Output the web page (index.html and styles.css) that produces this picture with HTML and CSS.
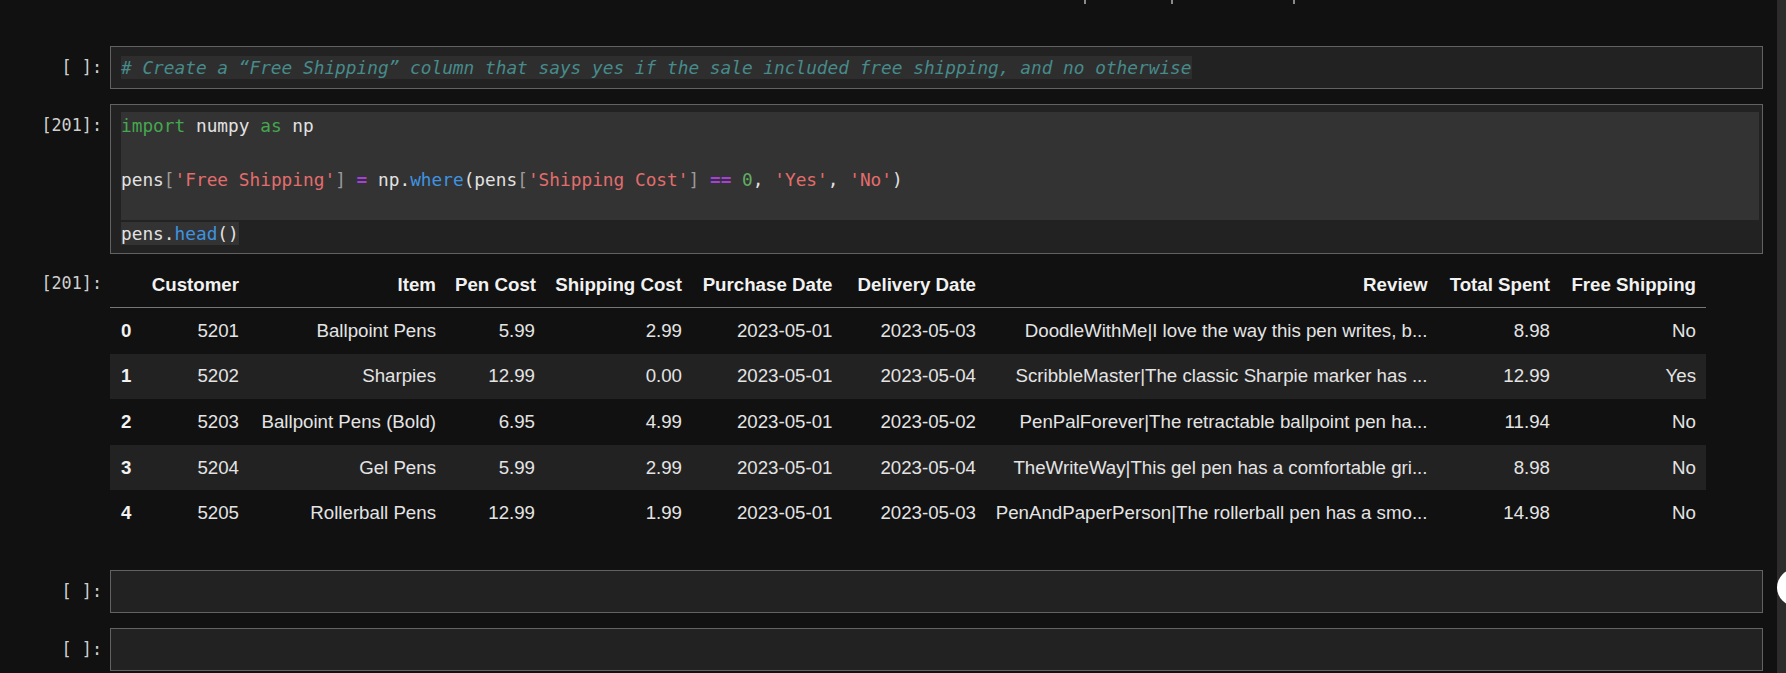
FILE: index.html
```html
<!DOCTYPE html>
<html lang="en">
<head>
<meta charset="utf-8">
<title>Notebook</title>
<link rel="stylesheet" href="styles.css">
</head>
<body>
<div class="app">
  <main class="notebook">
    <div class="topbar"><span class="mark m1"></span><span class="mark m2"></span><span class="mark m3"></span></div>

    <div class="cell">
      <div class="prompt">[ ]:</div>
      <div class="editor">
        <div class="line"><span class="sel sel-dim cm-comment"># Create a “Free Shipping” column that says yes if the sale included free shipping, and no otherwise</span></div>
      </div>
    </div>

    <div class="cell cell-has-output">
      <div class="prompt">[201]:</div>
      <div class="editor editor-multi">
        <div class="line line-sel"><span class="cm-kw">import</span> numpy <span class="cm-kw">as</span> np</div>
        <div class="line line-sel"> </div>
        <div class="line line-sel">pens<span class="cm-br">[</span><span class="cm-str">'Free Shipping'</span><span class="cm-br">]</span> <span class="cm-op">=</span> np.<span class="cm-prop">where</span>(pens<span class="cm-br">[</span><span class="cm-str">'Shipping Cost'</span><span class="cm-br">]</span> <span class="cm-op">==</span> <span class="cm-num">0</span>, <span class="cm-str">'Yes'</span>, <span class="cm-str">'No'</span>)</div>
        <div class="line line-sel"> </div>
        <div class="line"><span class="sel">pens.<span class="cm-prop">head</span>()</span></div>
      </div>
    </div>

    <div class="output">
      <div class="prompt out-prompt">[201]:</div>
      <div class="out-body">
        <table class="df">
          <colgroup>
            <col class="w-idx"><col class="w-cust"><col class="w-item"><col class="w-pen"><col class="w-ship"><col class="w-pdate"><col class="w-ddate"><col class="w-review"><col class="w-total"><col class="w-free">
          </colgroup>
          <thead>
            <tr><th></th><th>Customer</th><th>Item</th><th>Pen Cost</th><th>Shipping Cost</th><th>Purchase Date</th><th>Delivery Date</th><th>Review</th><th>Total Spent</th><th>Free Shipping</th></tr>
          </thead>
          <tbody>
            <tr><th>0</th><td>5201</td><td>Ballpoint Pens</td><td>5.99</td><td>2.99</td><td>2023-05-01</td><td>2023-05-03</td><td>DoodleWithMe|I love the way this pen writes, b...</td><td>8.98</td><td>No</td></tr>
            <tr><th>1</th><td>5202</td><td>Sharpies</td><td>12.99</td><td>0.00</td><td>2023-05-01</td><td>2023-05-04</td><td>ScribbleMaster|The classic Sharpie marker has ...</td><td>12.99</td><td>Yes</td></tr>
            <tr><th>2</th><td>5203</td><td>Ballpoint Pens (Bold)</td><td>6.95</td><td>4.99</td><td>2023-05-01</td><td>2023-05-02</td><td>PenPalForever|The retractable ballpoint pen ha...</td><td>11.94</td><td>No</td></tr>
            <tr><th>3</th><td>5204</td><td>Gel Pens</td><td>5.99</td><td>2.99</td><td>2023-05-01</td><td>2023-05-04</td><td>TheWriteWay|This gel pen has a comfortable gri...</td><td>8.98</td><td>No</td></tr>
            <tr><th>4</th><td>5205</td><td>Rollerball Pens</td><td>12.99</td><td>1.99</td><td>2023-05-01</td><td>2023-05-03</td><td>PenAndPaperPerson|The rollerball pen has a smo...</td><td>14.98</td><td>No</td></tr>
          </tbody>
        </table>
      </div>
    </div>

    <div class="cell">
      <div class="prompt">[ ]:</div>
      <div class="editor"><div class="line"> </div></div>
    </div>

    <div class="cell">
      <div class="prompt">[ ]:</div>
      <div class="editor"><div class="line"> </div></div>
    </div>
  </main>
  <aside class="scrollbar"><div class="knob"></div></aside>
</div>
</body>
</html>
```
FILE: styles.css
```css
html, body {
  margin: 0;
  padding: 0;
  background: #111111;
  height: 100%;
  overflow: hidden;
}

.app {
  display: flex;
  height: 673px;
  background: #111111;
}

.notebook {
  flex: 1;
  display: flex;
  flex-direction: column;
  padding: 0 14px 0 0;
  min-width: 0;
}

.topbar {
  flex: 0 0 46px;
  display: flex;
  align-items: flex-start;
}

.mark {
  display: block;
  width: 2px;
  height: 4px;
  background: #8a8a8a;
}
.m1 { margin-left: 1084px; }
.m2 { margin-left: 85px; }
.m3 { margin-left: 120px; }

.cell {
  display: flex;
  flex: 0 0 auto;
  margin-bottom: 15px;
}

.cell-has-output {
  margin-bottom: 8px;
}

.prompt {
  flex: 0 0 110px;
  box-sizing: border-box;
  padding: 8px 8px 0 0;
  text-align: right;
  font-family: "DejaVu Sans Mono", "Liberation Mono", monospace;
  font-size: 16.8px;
  line-height: 27px;
  color: #cfcfcf;
  white-space: pre;
}

.editor {
  flex: 1;
  min-width: 0;
  border: 1px solid #626262;
  background: #222222;
  padding: 7px 3px 7px 10px;
  font-family: "DejaVu Sans Mono", "Liberation Mono", monospace;
  font-size: 17.8px;
  color: #e2e2e2;
}

.editor-multi {
  padding-bottom: 6px;
}

.line {
  height: 27px;
  line-height: 27px;
  white-space: pre;
}

.line-sel {
  background: #333333;
}

.sel {
  background: #333333;
  padding: 1px 0;
}

.sel-dim {
  background: #2e2e2e;
}

.cm-comment { color: #478b8b; font-style: italic; }
.cm-kw { color: #45a74f; }
.cm-str { color: #e36d6d; }
.cm-br { color: #9a9a9a; }
.cm-op { color: #a63fdc; font-weight: bold; }
.cm-prop { color: #3f93e0; }
.cm-num { color: #62ad62; }

.output {
  display: flex;
  flex: 0 0 auto;
  margin-bottom: 34px;
}

.out-prompt {
  padding-top: 7.5px;
}

.out-body {
  flex: 1;
  min-width: 0;
}

.df {
  border-collapse: collapse;
  table-layout: fixed;
  width: 1595.5px;
  font-family: "Liberation Sans", Arial, sans-serif;
  font-size: 18.7px;
  color: #e4e4e4;
}

.w-idx { width: 32px; }
.w-cust { width: 106.5px; }
.w-item { width: 197px; }
.w-pen { width: 99px; }
.w-ship { width: 147px; }
.w-pdate { width: 150.5px; }
.w-ddate { width: 143.5px; }
.w-review { width: 451.5px; }
.w-total { width: 122.5px; }
.w-free { width: 146px; }

.df th,
.df td {
  padding: 0 9.5px;
  text-align: right;
  white-space: nowrap;
  vertical-align: middle;
}

.df thead th {
  height: 45px;
  font-weight: bold;
  color: #f2f2f2;
  border-bottom: 1px solid #767676;
}

.df tbody th {
  text-align: left;
  padding-left: 11px;
  font-weight: bold;
  color: #f2f2f2;
}

.df tbody td,
.df tbody th {
  height: 45.6px;
}

.df tbody tr:nth-child(even) {
  background: #222222;
}

.scrollbar {
  flex: 0 0 9px;
  background: #2c2c2c;
  position: relative;
}

.knob {
  position: absolute;
  top: 569px;
  left: 0;
  width: 37px;
  height: 37px;
  border-radius: 50%;
  background: #ffffff;
}
```
